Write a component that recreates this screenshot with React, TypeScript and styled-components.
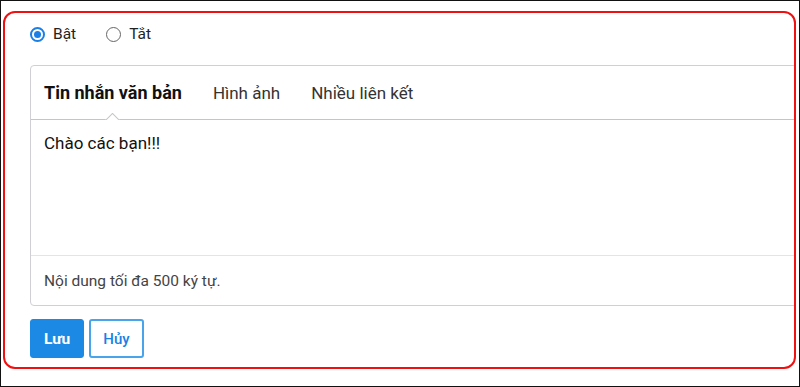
import React, { useState } from 'react';
import styled, { createGlobalStyle } from 'styled-components';

const GlobalStyle = createGlobalStyle`
  html, body {
    margin: 0;
    padding: 0;
    background: #fff;
  }
  body {
    font-family: Roboto, "Liberation Sans", Arial, sans-serif;
    color: #222;
  }
`;

const Frame = styled.div`
  width: 800px;
  height: 387px;
  box-sizing: border-box;
  border: 1px solid #111;
  padding: 10px 3px 17px 2px;
  background: #fff;
`;

const Highlight = styled.div`
  height: 100%;
  box-sizing: border-box;
  border: 2px solid #f01010;
  border-radius: 12px;
  overflow: hidden;
  padding: 11px 0 0 25px;
  display: flex;
  flex-direction: column;
  & > * {
    flex-shrink: 0;
  }
`;

const RadioRow = styled.div`
  display: flex;
  align-items: center;
  gap: 30px;
  height: 20px;
`;

const RadioLabel = styled.label`
  display: flex;
  align-items: center;
  gap: 8px;
  font-size: 15.5px;
  color: #222;
  cursor: pointer;
`;

const RadioDot = styled.span<{ $checked: boolean }>`
  width: 15px;
  height: 15px;
  box-sizing: border-box;
  border-radius: 50%;
  border: ${(p) => (p.$checked ? '2px solid #1a7fe6' : '1.5px solid #666')};
  display: inline-flex;
  align-items: center;
  justify-content: center;
  &::after {
    content: '';
    width: 7px;
    height: 7px;
    border-radius: 50%;
    background: ${(p) => (p.$checked ? '#1a7fe6' : 'transparent')};
  }
`;

const Card = styled.div`
  margin-top: 21px;
  width: calc(100% + 20px);
  border: 1px solid #cfcfd4;
  border-radius: 4px;
  background: #fff;
`;

const TabBar = styled.div`
  display: flex;
  align-items: center;
  height: 53px;
  padding-left: 13px;
  gap: 31px;
  border-bottom: 1px solid #c4c4ca;
`;

const Tab = styled.div<{ $active?: boolean }>`
  position: relative;
  font-size: ${(p) => (p.$active ? '18px' : '17px')};
  font-weight: ${(p) => (p.$active ? 700 : 400)};
  color: ${(p) => (p.$active ? '#111' : '#333')};
  height: 100%;
  display: flex;
  align-items: center;
  cursor: pointer;
`;

const Caret = styled.span`
  position: absolute;
  bottom: -1px;
  left: 50%;
  transform: translateX(-50%);
  width: 16px;
  height: 7px;
  overflow: hidden;
  &::before {
    content: '';
    position: absolute;
    left: 2px;
    top: 2px;
    width: 10px;
    height: 10px;
    background: #fff;
    border-left: 1px solid #c4c4ca;
    border-top: 1px solid #c4c4ca;
    transform: rotate(45deg);
  }
`;

const Body = styled.div`
  height: 136px;
  padding: 13px 13px 0;
  box-sizing: border-box;
  font-size: 17px;
  color: #111;
  border-bottom: 1px solid #e4e4e8;
`;

const Footer = styled.div`
  height: 49px;
  display: flex;
  align-items: center;
  padding-left: 13px;
  font-size: 15.5px;
  color: #444;
`;

const Actions = styled.div`
  display: flex;
  gap: 5px;
  margin-top: 13px;
`;

const Button = styled.button<{ $primary?: boolean }>`
  height: 39px;
  box-sizing: border-box;
  padding: 0 ${(p) => (p.$primary ? '13px' : '12px')};
  min-width: 53px;
  border-radius: 3px;
  font-family: Roboto, "Liberation Sans", Arial, sans-serif;
  font-size: ${(p) => (p.$primary ? '15.5px' : '15px')};
  font-weight: ${(p) => (p.$primary ? 700 : 500)};
  color: ${(p) => (p.$primary ? '#fff' : '#1a7fe6')};
  background: ${(p) => (p.$primary ? '#1c8ae4' : '#fff')};
  border: ${(p) => (p.$primary ? '1px solid #1c8ae4' : '2px solid #4aa4ea')};
  cursor: pointer;
`;

const tabs = ['Tin nhắn văn bản', 'Hình ảnh', 'Nhiều liên kết'];

export default function App() {
  const [on, setOn] = useState(true);
  const [active, setActive] = useState(0);

  return (
    <>
      <GlobalStyle />
      <Frame>
        <Highlight>
          <RadioRow>
            <RadioLabel onClick={() => setOn(true)}>
              <RadioDot $checked={on} />
              Bật
            </RadioLabel>
            <RadioLabel onClick={() => setOn(false)}>
              <RadioDot $checked={!on} />
              Tắt
            </RadioLabel>
          </RadioRow>
          <Card>
            <TabBar>
              {tabs.map((t, i) => (
                <Tab key={t} $active={i === active} onClick={() => setActive(i)}>
                  {t}
                  {i === active && <Caret />}
                </Tab>
              ))}
            </TabBar>
            <Body>Chào các bạn!!!</Body>
            <Footer>Nội dung tối đa 500 ký tự.</Footer>
          </Card>
          <Actions>
            <Button $primary>Lưu</Button>
            <Button>Hủy</Button>
          </Actions>
        </Highlight>
      </Frame>
    </>
  );
}
